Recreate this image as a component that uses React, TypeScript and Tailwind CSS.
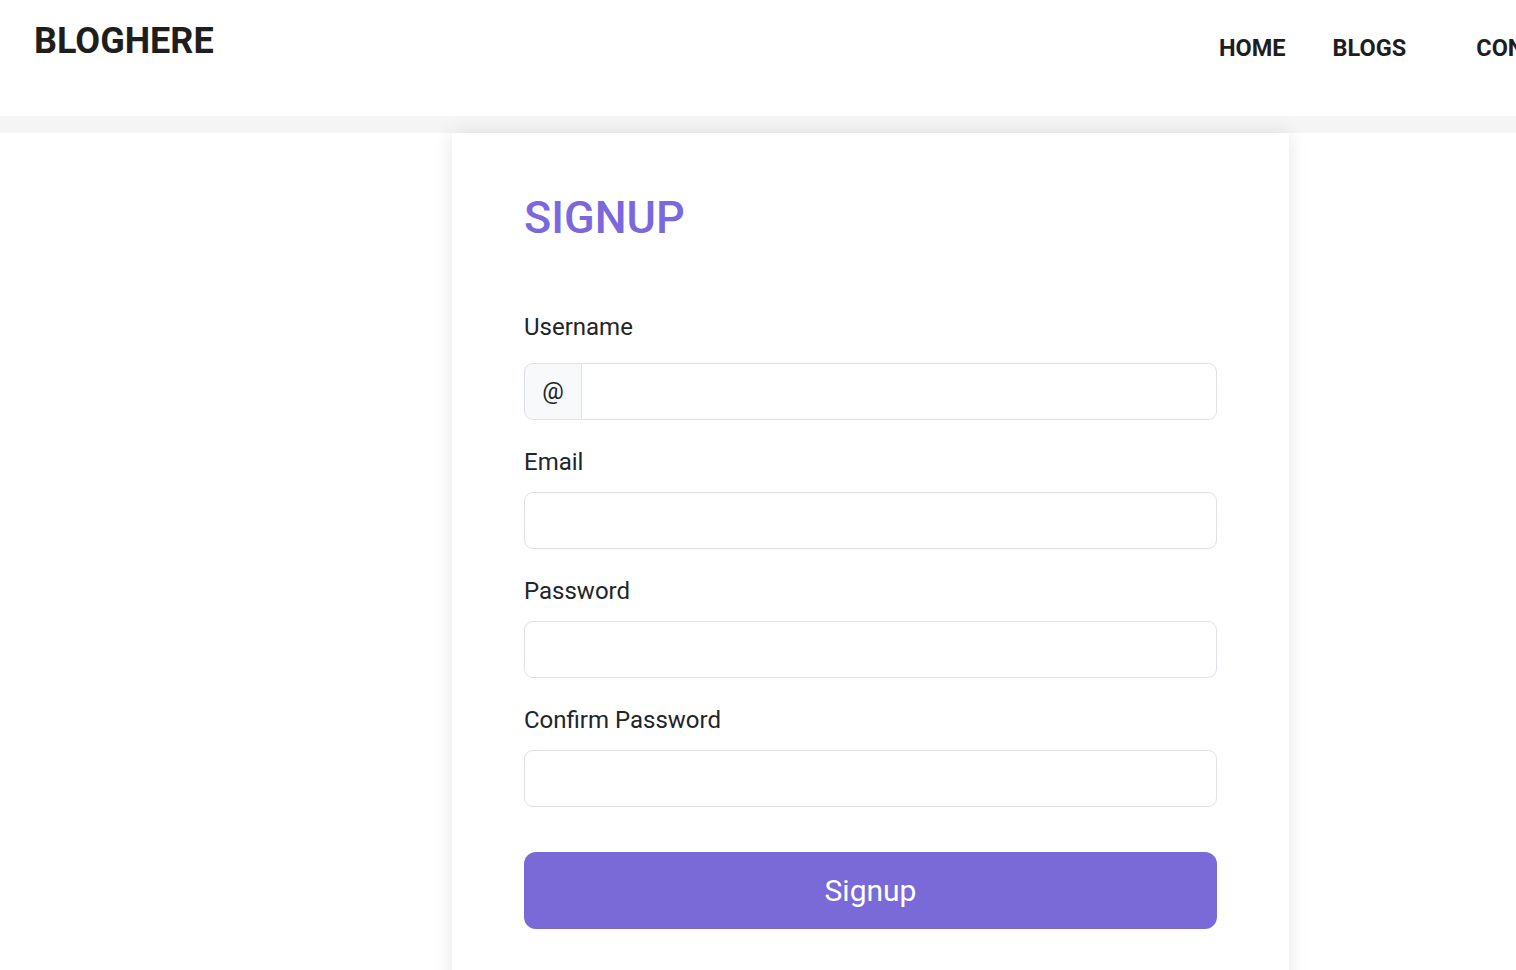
const FIELDS = [
    { id: "email", label: "Email", type: "email" },
    { id: "password", label: "Password", type: "password" },
    { id: "confirm", label: "Confirm Password", type: "password" },
];

export default function App() {
    return (
        <div className="w-[1516px] h-[970px] overflow-hidden bg-white text-[#212529] font-['Roboto',sans-serif]">
            <header className="h-[116px] flex items-start whitespace-nowrap">
                <div className="w-[1219px] shrink-0 pl-[34px] pt-[23px]">
                    <span className="text-[36px] leading-none font-bold text-[#1e1e1e]">BLOGHERE</span>
                </div>
                <nav className="flex shrink-0 pt-[37px] text-[23.5px] leading-none font-bold text-[#1e1e1e]">
                    <a className="mr-[47px]">HOME</a>
                    <a className="mr-[70px]">BLOGS</a>
                    <a>CONTACT</a>
                </nav>
            </header>

            <div className="h-[17px] bg-[#f5f5f5]" />

            <div className="flex pl-[452px]">
                <div className="relative w-[837px] shrink-0 bg-white shadow-[0_0_18px_rgba(0,0,0,0.1)] px-[72px] pt-[58px] pb-[60px]">
                    <h2 className="text-[45px] leading-[1.2] font-medium text-[#7b68dd] mb-[64px]">SIGNUP</h2>

                    <form onSubmit={(e) => e.preventDefault()}>
                        <label htmlFor="username" className="block text-[24px] leading-[36px] mb-[17.5px]">Username</label>
                        <div className="flex h-[57px] mb-[24px]">
                            <span className="w-[58px] flex items-center justify-center bg-[#f8f9fa] border border-[#dee2e6] rounded-l-[9px] text-[24px]">@</span>
                            <input id="username" className="flex-1 min-w-0 border border-l-0 border-[#dee2e6] rounded-r-[9px] px-[18px] text-[24px] outline-none" />
                        </div>

                        {FIELDS.map(f => (
                            <div key={f.id} className="mb-[24px]">
                                <label htmlFor={f.id} className="block text-[24px] leading-[36px] mb-[12px]">{f.label}</label>
                                <input id={f.id} type={f.type} className="block w-full h-[57px] border border-[#dee2e6] rounded-[9px] px-[18px] text-[24px] outline-none" />
                            </div>
                        ))}

                        <button type="submit" className="mt-[21.5px] w-full h-[77px] rounded-[12px] bg-[#7a6ad8] text-white text-[30px] leading-none">
                            Signup
                        </button>
                    </form>
                </div>
            </div>
        </div>
    );
}
